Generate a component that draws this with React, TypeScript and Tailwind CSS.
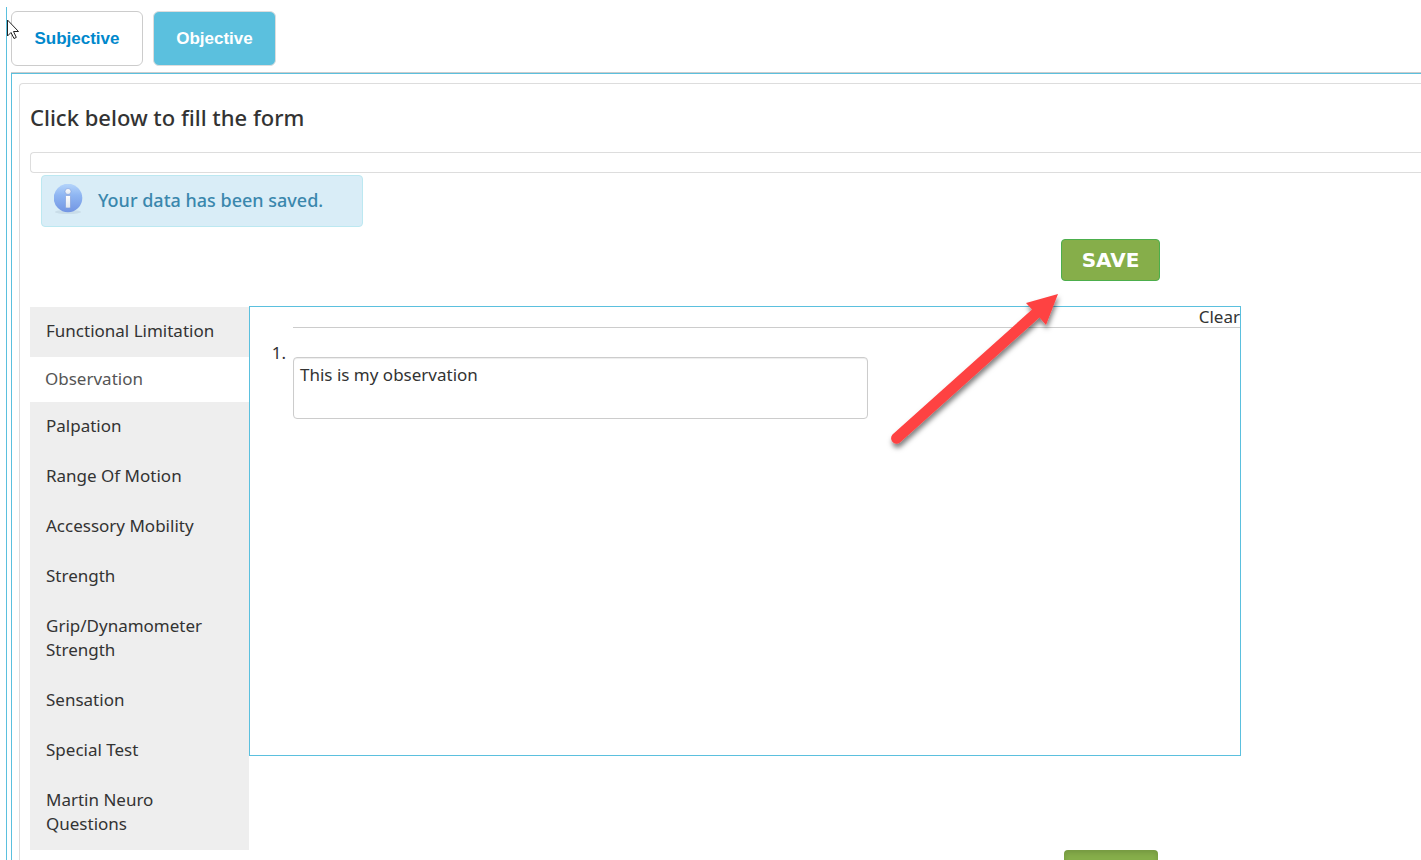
const sections = [
    "Functional Limitation",
    "Observation",
    "Palpation",
    "Range Of Motion",
    "Accessory Mobility",
    "Strength",
    "Grip/Dynamometer Strength",
    "Sensation",
    "Special Test",
    "Martin Neuro Questions",
]

const InfoIcon = () => {
    return (
        <svg width="30" height="32" viewBox="0 0 30 32" aria-hidden="true">
            <defs>
                <linearGradient id="infoBall" x1="0" y1="0" x2="0" y2="1">
                    <stop offset="0" stopColor="#b5d5fb" />
                    <stop offset="0.4" stopColor="#8fb6f2" />
                    <stop offset="1" stopColor="#7295e3" />
                </linearGradient>
                <linearGradient id="infoMark" x1="0" y1="0" x2="0" y2="1">
                    <stop offset="0" stopColor="#ffffff" />
                    <stop offset="1" stopColor="#dfe6f0" />
                </linearGradient>
            </defs>
            <ellipse cx="14" cy="28" rx="13" ry="2" fill="#c9dde9" />
            <circle cx="14" cy="14" r="14.3" fill="url(#infoBall)" />
            <circle cx="14" cy="7.5" r="3" fill="url(#infoMark)" stroke="#7b98d8" strokeWidth="0.6" />
            <rect x="11.5" y="11.5" width="5" height="12.5" rx="1" fill="url(#infoMark)" stroke="#7b98d8" strokeWidth="0.6" />
        </svg>
    )
}

const Arrow = () => {
    return (
        <svg className="absolute -top-[17px] right-[175px] pointer-events-none" width="180" height="170" viewBox="0 0 180 170" aria-hidden="true">
            <defs>
                <filter id="arrowShadow" x="-10%" y="-10%" width="120%" height="120%">
                    <feDropShadow dx="1" dy="4" stdDeviation="2.5" floodColor="#000" floodOpacity="0.5" />
                </filter>
            </defs>
            <path d="M173 4L141 13L147 19.5L7.5 144.5A5.5 5.5 0 0 0 15 152.5L154.5 27.5L161 35Z" fill="#fe4242" filter="url(#arrowShadow)" />
        </svg>
    )
}

const Cursor = () => {
    return (
        <svg className="absolute left-[7px] top-[19px]" width="13" height="21" viewBox="0 0 13 21" aria-hidden="true">
            <path d="M0.5 1V17L4 13.5L7 19.5L9.3 18.4L6.5 12.5H11.5Z" fill="#fff" stroke="#222" strokeWidth="1" />
        </svg>
    )
}

const App = () => {
    return (
        <div className="relative bg-white text-[#333] font-['Noto_Sans',sans-serif] text-[17px] pt-[7px] pl-[6px] h-screen overflow-hidden">
            <div className="border-l border-[#5bc0de] pl-1 pt-1 min-h-full">
                <nav className="flex gap-[10px] pb-[6px] font-['Liberation_Sans',sans-serif] font-bold">
                    <a href="#subjective" className="flex items-center justify-center w-[132px] h-[55px] rounded-md border border-[#ccc] text-[#0088cc]">Subjective</a>
                    <a href="#objective" className="flex items-center justify-center w-[123px] h-[55px] rounded-md border border-[#ddd] bg-[#5bc0de] text-white">Objective</a>
                </nav>

                <div className="border-t border-[#ccc]">
                    <div className="border-t border-l border-[#5bc0de] pl-[7px] pt-[9px]">
                        <main className="border-t border-l border-[#ddd] rounded-tl pl-[10px] pt-[19px]">
                            <h1 className="text-[22px] leading-7 font-medium">Click below to fill the form</h1>
                            <div className="mt-[21px] h-[21px] border border-r-0 border-[#ddd] rounded-l"></div>

                            <div className="mr-[180px]">
                                <div role="status" className="flex items-center gap-[14px] w-[322px] h-[52px] mt-[2px] ml-[11px] pl-3 pb-[2px] rounded border border-[#bce8f1] bg-[#d9edf7] text-[#3a87ad] text-lg font-medium">
                                    <InfoIcon />
                                    Your data has been saved.
                                </div>

                                <div className="flex justify-end mt-3 mr-[81px]">
                                    <button className="w-[99px] h-[42px] rounded border border-[#4cae4c] bg-[#86ae4a] text-white text-xl font-bold font-['DejaVu_Sans',sans-serif]">SAVE</button>
                                </div>

                                <div className="flex items-start mt-[25px]">
                                    <ul className="w-[219px] shrink-0 bg-[#eee] mt-px">
                                        {sections.map((name) => (
                                            <li key={name}>
                                                {name === "Observation" ? (
                                                    <a href="#section" aria-current="true" className="block bg-white text-[#555] leading-6 pl-[15px] pt-[10px] pb-[11px]">{name}</a>
                                                ) : (
                                                    <a href="#section" className="block leading-6 pl-4 pr-6 pt-3 pb-[14px]">{name}</a>
                                                )}
                                            </li>
                                        ))}
                                    </ul>

                                    <section className="relative grow h-[450px] border border-[#5bc0de]">
                                        <div className="flex justify-end ml-[43px] border-b border-[#ccc]">
                                            <button className="leading-5">Clear</button>
                                        </div>
                                        <div className="flex">
                                            <label htmlFor="observation" className="w-[43px] pr-[7px] pt-[13px] text-right leading-6">1.</label>
                                            <textarea id="observation" className="block w-[575px] h-[62px] mt-[29px] px-[6px] py-[5px] leading-6 resize-none rounded border border-[#ccc] shadow-[inset_0_1px_1px_rgba(0,0,0,0.075)]" defaultValue="This is my observation" />
                                        </div>
                                        <Arrow />
                                    </section>
                                </div>

                                <div className="flex justify-end mr-[83px]">
                                    <button className="w-[94px] py-3 leading-5 rounded bg-[#86ae4a] text-white text-xl font-bold font-['DejaVu_Sans',sans-serif] shadow-[inset_0_3px_5px_rgba(0,0,0,0.125)]">SAVE</button>
                                </div>
                            </div>
                        </main>
                    </div>
                </div>
            </div>
            <Cursor />
        </div>
    )
}

export default App
